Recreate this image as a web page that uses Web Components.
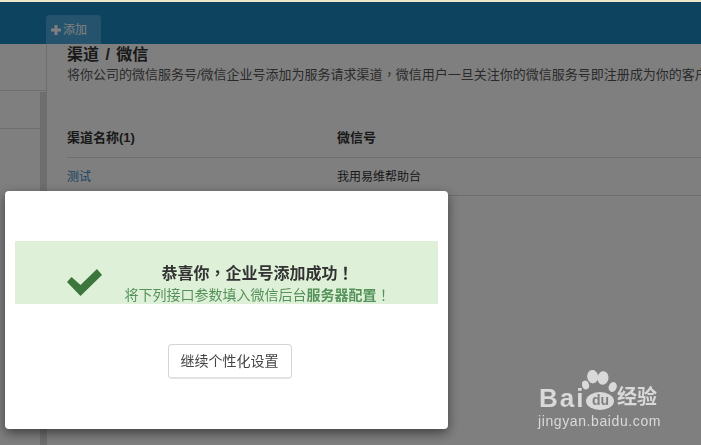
<!DOCTYPE html>
<html>
<head>
<meta charset="utf-8">
<style>
	html, body { margin: 0; height: 100%; overflow: hidden; background: #fff; }
	body {
		font: 13px/18px "Liberation Sans", "Noto Sans CJK SC", sans-serif;
		color: #333;
		text-spacing-trim: space-all;
	}
	i { font-style: normal; font-family: "Noto Sans CJK TC", sans-serif; line-height: 0; }
	#app { display: flex; flex-direction: column; height: 445px; }
	#main { display: flex; flex: 1; min-height: 0; }
</style>
</head>
<body>
<div id="app">
	<top-bar></top-bar>
	<div id="main">
		<side-nav></side-nav>
		<channel-page></channel-page>
	</div>
</div>
<success-dialog>
	<span slot="title">恭喜你<i>，</i>企业号添加成功<i>！</i></span>
	<span slot="hint">将下列接口参数填入微信后台<b>服务器配置</b><i>！</i></span>
	<span slot="action">继续个性化设置</span>
</success-dialog>
<baidu-mark></baidu-mark>

<script>
function defineElement(name, html) {
	const template = document.createElement('template');
	template.innerHTML = html;
	customElements.define(name, class extends HTMLElement {
		constructor() {
			super();
			this.attachShadow({ mode: 'open' }).appendChild(template.content.cloneNode(true));
		}
	});
}

defineElement('top-bar', /* html */`
<style>
	:host {
		box-sizing: border-box;
		display: flex;
		align-items: flex-end;
		height: 44px;
		padding-left: 46px;
		background: #1c86c0;
		border-top: 2px solid #efe8c8;
	}
	.tab {
		box-sizing: border-box;
		display: flex;
		align-items: center;
		gap: 2px;
		width: 55px;
		height: 29px;
		padding-left: 5px;
		background: #4ba7db;
		border-radius: 4px 4px 0 0;
		color: #fff;
		font-size: 12px;
	}
	svg { width: 10px; height: 10px; fill: #fff; }
</style>
<div class="tab">
	<svg viewBox="0 0 10 10"><path d="M3.500 0h3v3.500H10v3H6.500V10h-3V6.500H0v-3h3.500z"/></svg>
	<span>添加</span>
</div>
`);

defineElement('side-nav', /* html */`
<style>
	:host {
		box-sizing: border-box;
		display: block;
		position: relative;
		flex: none;
		width: 47px;
		background: #fff;
		border-right: 1px solid #ddd;
	}
	.row { height: 37px; border-bottom: 1px solid #ddd; }
	.row.first { height: 46px; }
	.scroll {
		position: absolute;
		top: 48px;
		bottom: 0;
		right: 0;
		width: 6px;
		background: #ddd;
	}
</style>
<div class="row first"></div>
<div class="row"></div>
<div class="scroll"></div>
`);

defineElement('channel-page', /* html */`
<style>
	:host {
		display: block;
		flex: 1;
		min-width: 0;
		padding: 2px 0 0 20px;
		overflow: hidden;
		background: #fff;
	}
	h1 { margin: 0; font-size: 16px; line-height: 18px; font-weight: 700; color: #333; word-spacing: 2px; }
	p {
		margin: 2px 0 0;
		font-size: 13px;
		line-height: 18px;
		white-space: nowrap;
		color: #555;
	}
	i { font-style: normal; font-family: "Noto Sans CJK TC", sans-serif; line-height: 0; }
	.row {
		display: grid;
		grid-template-columns: 270px 1fr;
		align-items: center;
		border-bottom: 1px solid #ddd;
	}
	.head { height: 39px; margin-top: 34px; font-weight: 700; }
	.body { height: 37px; font-size: 12px; }
	a { color: #2f86c4; text-decoration: none; }
</style>
<h1>渠道 / 微信</h1>
<p>将你公司的微信服务号/微信企业号添加为服务请求渠道<i>，</i>微信用户一旦关注你的微信服务号即注册成为你的客户</p>
<div class="row head"><span>渠道名称(1)</span><span>微信号</span></div>
<div class="row body"><a>测试</a><span>我用易维帮助台</span></div>
`);

defineElement('success-dialog', /* html */`
<style>
	:host {
		display: block;
		position: fixed;
		inset: 2px 0 0 0;
		background: rgba(0, 0, 0, .5);
	}
	.box {
		box-sizing: border-box;
		position: absolute;
		left: 5px;
		top: 189px;
		width: 443px;
		height: 238px;
		display: flex;
		flex-direction: column;
		align-items: center;
		padding: 50px 10px 0;
		background: #fff;
		border-radius: 4px;
		box-shadow: 0 4px 12px rgba(0, 0, 0, .5);
	}
	.band {
		box-sizing: border-box;
		align-self: stretch;
		display: grid;
		grid-template-columns: 87px 1fr;
		height: 63px;
		background: #dff0d8;
	}
	.icon { display: flex; justify-content: flex-end; padding-top: 28px; }
	svg { width: 35px; height: 27px; fill: #3c763d; }
	.text {
		display: flex;
		flex-direction: column;
		align-items: center;
		padding: 23px 25px 0 0;
		white-space: nowrap;
	}
	.title { font-size: 16px; line-height: 20px; font-weight: 700; color: #333; }
	.hint { margin-top: 2px; font-size: 14px; line-height: 18px; color: #55925a; }
	::slotted(b) { color: #3c763d; }
	.action {
		box-sizing: border-box;
		display: flex;
		align-items: center;
		justify-content: center;
		width: 124px;
		height: 35px;
		margin: 40px 0 0 6px;
		border: 1px solid #d5d5d5;
		border-bottom: 2px solid #e2e2e2;
		border-radius: 4px;
		font-size: 14px;
		color: #444;
	}
</style>
<div class="box">
	<div class="band">
		<div class="icon">
			<svg viewBox="0 0 35 27"><path d="M0 13 4.500 8l9 8L30 0l5 6-21.500 21z"/></svg>
		</div>
		<div class="text">
			<span class="title"><slot name="title"></slot></span>
			<span class="hint"><slot name="hint"></slot></span>
		</div>
	</div>
	<div class="action"><slot name="action"></slot></div>
</div>
`);

defineElement('baidu-mark', /* html */`
<style>
	:host {
		display: block;
		position: fixed;
		left: 537px;
		top: 369px;
		width: 126px;
		height: 62px;
		color: #d9d9d9;
		font-family: "Liberation Sans", "Noto Sans CJK SC", sans-serif;
	}
	svg { position: absolute; left: 45px; top: 1px; width: 36px; height: 41px; fill: #d9d9d9; }
	span { position: absolute; white-space: nowrap; }
	.bai { left: 2px; top: 16px; font-size: 26px; line-height: 26px; font-weight: 700; letter-spacing: 2px; }
	.du { left: 55px; top: 24px; font-size: 14px; line-height: 14px; font-weight: 700; color: #808080; }
	.cn { left: 80px; top: 17px; font-size: 20px; line-height: 22px; font-weight: 700; }
	.url { left: 1px; top: 44px; font-size: 14px; line-height: 16px; letter-spacing: .6px; }
</style>
<svg viewBox="0 0 36 41">
	<ellipse cx="3.500" cy="15" rx="3.500" ry="4.500" transform="rotate(-20 3.500 15)"/>
	<ellipse cx="10.700" cy="6.700" rx="5.500" ry="6.700" transform="rotate(-8 10.700 6.700)"/>
	<ellipse cx="21" cy="8" rx="5.500" ry="6.700" transform="rotate(8 21 8)"/>
	<ellipse cx="30.700" cy="17" rx="4" ry="5" transform="rotate(20 30.700 17)"/>
	<ellipse cx="18" cy="31" rx="14" ry="9"/>
</svg>
<span class="bai">Bai</span>
<span class="du">du</span>
<span class="cn">经验</span>
<span class="url">jingyan.baidu.com</span>
`);
</script>
</body>
</html>
